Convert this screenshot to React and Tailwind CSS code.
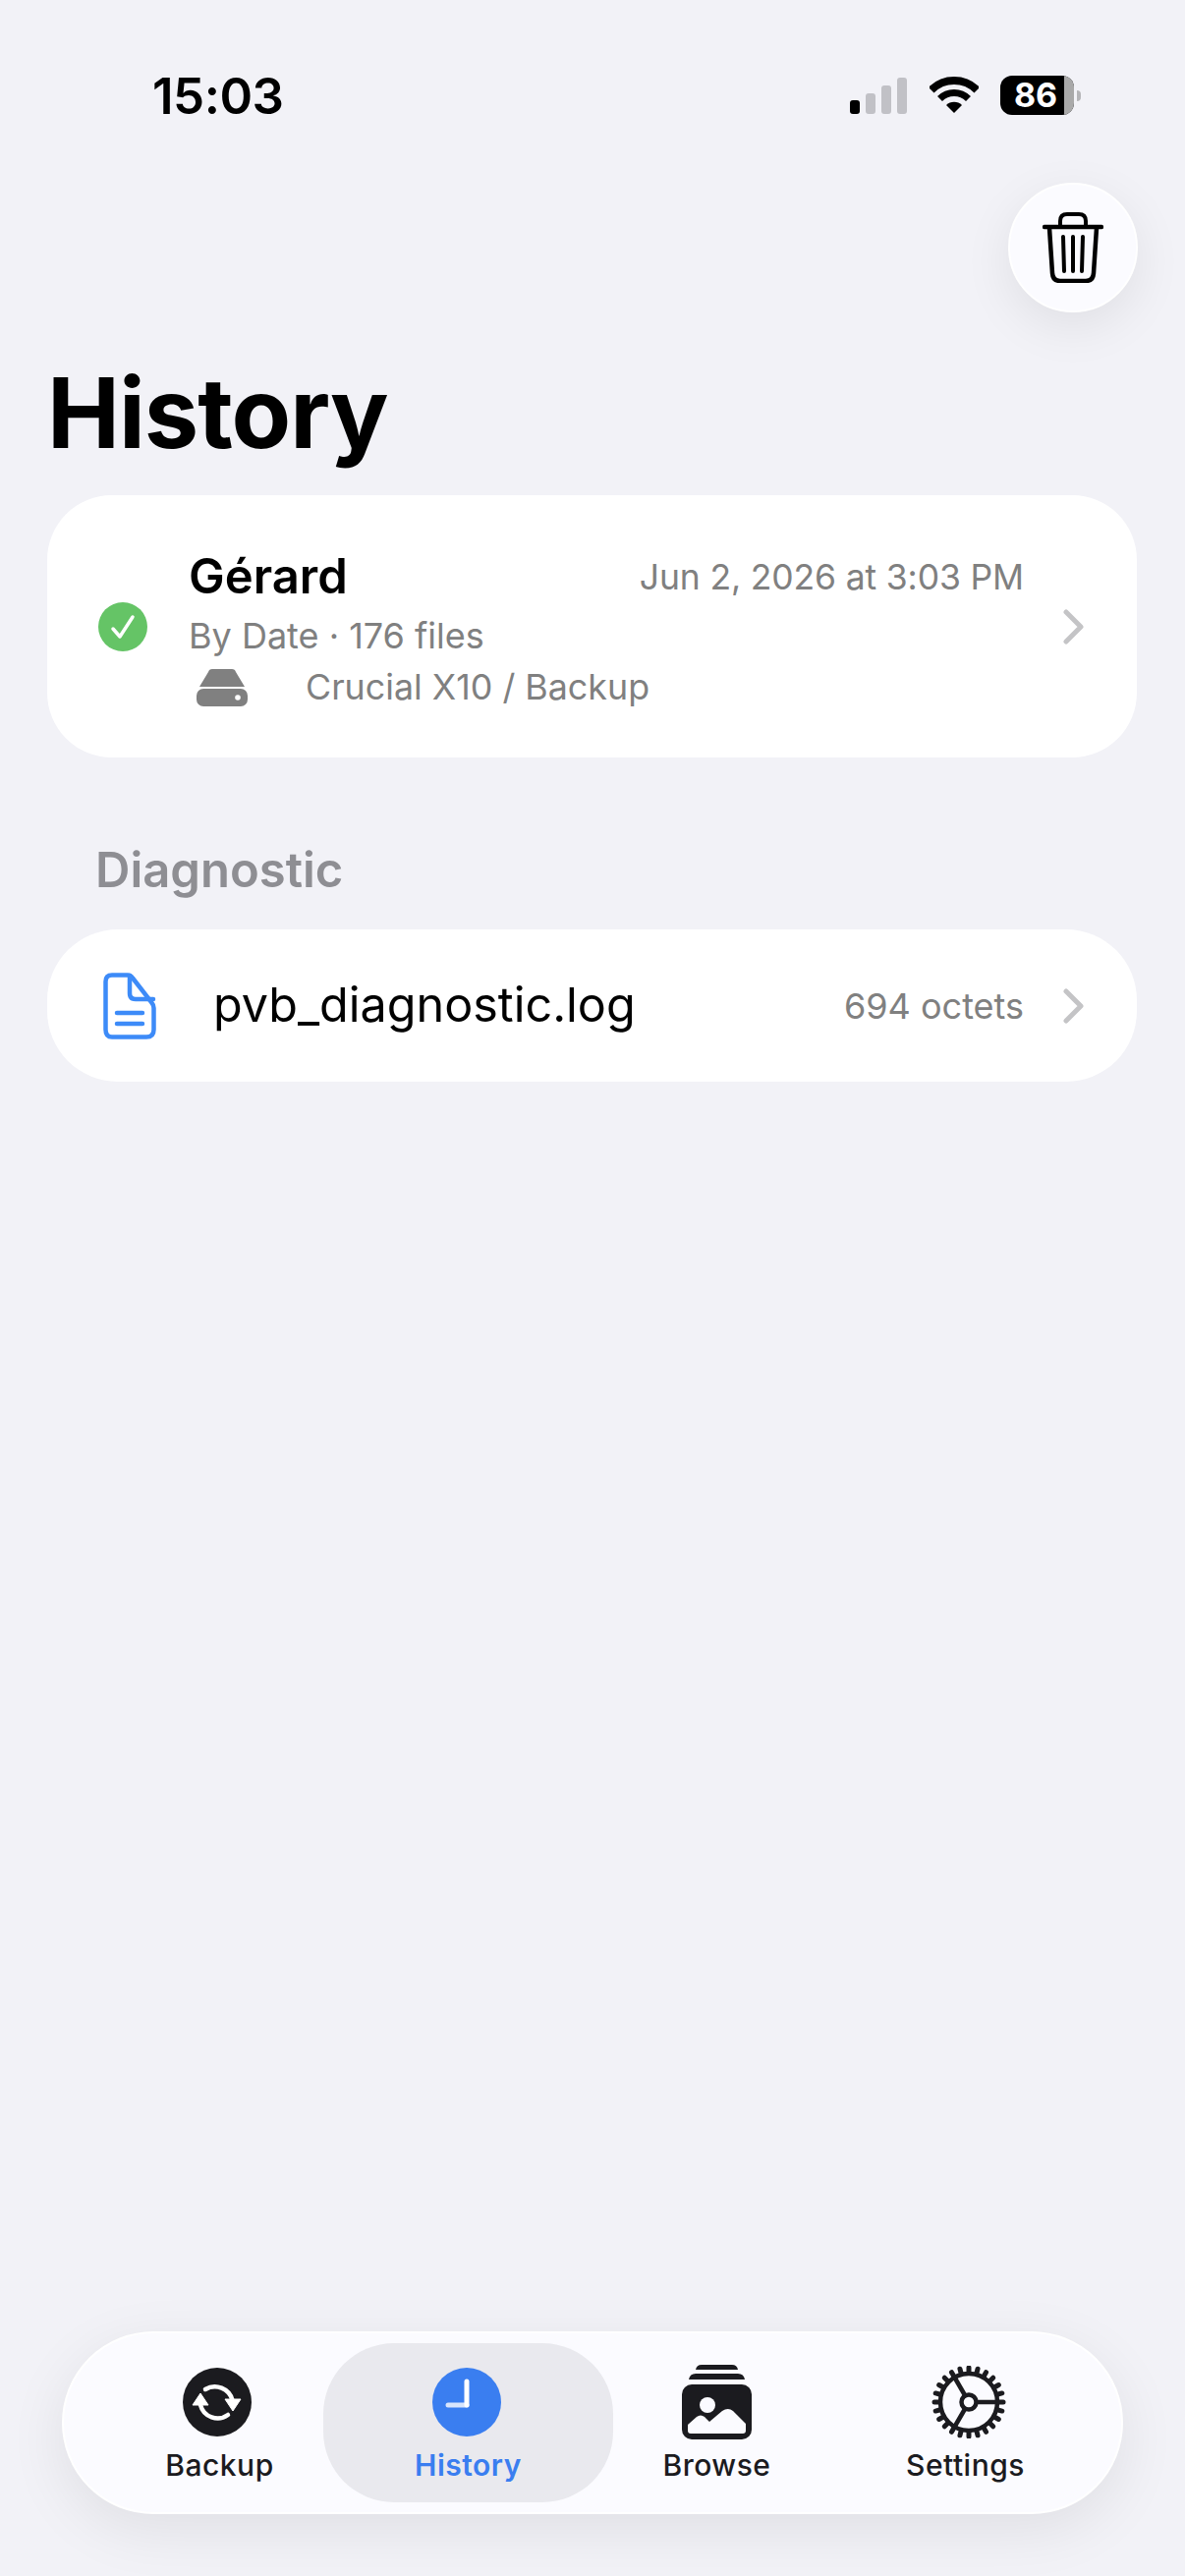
const BatteryStatus = () => (
  <div className="flex items-center">
    <div className="relative flex h-[40px] w-[75px] overflow-hidden rounded-[12px] bg-black">
      <div className="flex w-[65px] items-center justify-center pl-[7px] text-[34px] font-bold leading-none text-white">86</div>
      <div className="w-[10px] bg-[#a9a9a9]" />
    </div>
    <div className="ml-[3px] h-[11px] w-[4px] rounded-r-full bg-[#b5b5b8]" />
  </div>
);

const StatusBar = () => (
  <div className="flex h-[40px] items-center justify-between pl-[155px] pr-[106px]">
    <span className="text-[51px] font-semibold leading-none tracking-[-0.5px] text-black">15:03</span>
    <div className="flex items-center">
      <div className="flex h-[37px] items-end gap-[6px]">
        <div className="h-[14px] w-[10px] rounded-[3px] bg-black" />
        <div className="h-[21px] w-[10px] rounded-[3px] bg-[#c1c1c6]" />
        <div className="h-[29px] w-[10px] rounded-[3px] bg-[#c1c1c6]" />
        <div className="h-[37px] w-[10px] rounded-[3px] bg-[#c1c1c6]" />
      </div>
      <svg className="ml-[23px] mr-[22px]" width="50" height="38" viewBox="0 0 50 38">
        <path d="M1.7 13.7A33 33 0 0 1 48.3 13.7" fill="none" stroke="#000" strokeWidth="8" />
        <path d="M10.5 22.5A20.5 20.5 0 0 1 39.5 22.5" fill="none" stroke="#000" strokeWidth="7" />
        <path d="M25 37L17 29A11.3 11.3 0 0 1 33 29Z" fill="#000" />
      </svg>
      <BatteryStatus />
    </div>
  </div>
);

const TrashIcon = () => (
  <svg width="62" height="72" viewBox="0 0 62 72" fill="none" stroke="#000" strokeLinecap="round" strokeLinejoin="round">
    <path d="M2 15H60" strokeWidth="4.5" />
    <path d="M18 15V9Q18 2 25 2H37Q44 2 44 9V15" strokeWidth="4" />
    <path d="M7 16L10 62Q10.500 70 18 70H44Q51.500 70 52 62L55 16" strokeWidth="4.5" />
    <path d="M21 25L22 60M31 25V60M41 25L40 60" strokeWidth="4" />
  </svg>
);

const CheckBadge = () => (
  <svg width="50" height="50" viewBox="0 0 50 50">
    <circle cx="25" cy="25" r="25" fill="#65c466" />
    <path d="M15 27L22 35L35 15" fill="none" stroke="#fff" strokeWidth="3.500" strokeLinecap="round" strokeLinejoin="round" />
  </svg>
);

const DriveIcon = () => (
  <svg width="52" height="38" viewBox="0 0 52 38" fill="#808080">
    <path d="M12 3Q12.800 0 16 0H36Q39.200 0 40 3L49 18H3Z" />
    <rect x="0" y="20" width="52" height="18" rx="7" />
    <circle cx="42" cy="29" r="2.800" fill="#fff" />
  </svg>
);

const DocIcon = () => (
  <svg width="54" height="68" viewBox="0 0 54 68" fill="none" stroke="#3d8bf8" strokeWidth="4.500" strokeLinecap="round" strokeLinejoin="round">
    <path d="M9 2.500H25Q28 2.500 30 5.500L49 30Q51.500 33 51.500 36V58Q51.500 65.500 44 65.500H9Q2.500 65.500 2.500 58V9Q2.500 2.500 9 2.500Z" />
    <path d="M27 3V21Q27 27 33 27H51" />
    <path d="M14 41H40M14 52H40" />
  </svg>
);

const Chevron = () => (
  <svg width="21" height="36" viewBox="0 0 21 36" fill="none" stroke="#c4c4c6" strokeWidth="5" strokeLinecap="round" strokeLinejoin="round">
    <path d="M3 3L18 18L3 33" />
  </svg>
);

const SyncIcon = () => (
  <svg className="mr-[5px]" width="70" height="70" viewBox="0 0 70 70">
    <circle cx="35" cy="35" r="35" fill="#1b1b1f" />
    <path d="M23 22A18.500 18.500 0 0 1 50.500 33" fill="none" stroke="#fff" strokeWidth="4.500" strokeLinecap="round" />
    <path d="M18 38A18 18 0 0 0 46 48" fill="none" stroke="#fff" strokeWidth="4.500" strokeLinecap="round" />
    <path d="M18 26L26 38H10Z" fill="#fff" stroke="#fff" strokeWidth="1" strokeLinejoin="round" />
    <path d="M51 44L43 32H59Z" fill="#fff" stroke="#fff" strokeWidth="1" strokeLinejoin="round" />
  </svg>
);

const ClockIcon = () => (
  <svg className="mr-[3px]" width="70" height="70" viewBox="0 0 70 70" fill="none" strokeLinecap="round" strokeLinejoin="round">
    <circle cx="35" cy="35" r="35" fill="#3a7ef0" />
    <path d="M35 14V38" stroke="#fff" strokeWidth="5" />
    <path d="M35 38H16" stroke="#fff" strokeOpacity="0.8" strokeWidth="5" />
  </svg>
);

const BrowseIcon = () => (
  <svg width="71" height="76" viewBox="0 0 71 76">
    <path d="M14 5Q15 0 20 0H51Q56 0 57 5Z" fill="#1b1b1f" />
    <path d="M7 15Q8 9 14 9H57Q63 9 64 15Z" fill="#1b1b1f" />
    <rect x="0" y="20" width="71" height="56" rx="10" fill="#1b1b1f" />
    <circle cx="26" cy="41" r="8" fill="#fbfbff" />
    <path d="M6 61L15 53Q19 50 23 53L28 58L41 47Q47 43 52 47L65 60V67Q65 70 62 70H9Q6 70 6 67Z" fill="#fbfbff" />
  </svg>
);

const GearIcon = () => {
  const teeth = Array.from({ length: 24 }, (_, i) => i * 15);
  return (
    <svg className="ml-[6px]" width="76" height="74" viewBox="0 0 76 74" fill="none" stroke="#1b1b1f">
      <circle cx="38" cy="37" r="29" strokeWidth="4.500" />
      {teeth.map((deg) => (
        <path key={deg} d="M38 7V2" strokeWidth="5" strokeLinecap="round" transform={`rotate(${deg} 38 37)`} />
      ))}
      <circle cx="38" cy="37" r="7.500" strokeWidth="4.500" />
      <path d="M45 37H66M34 30L23 11M34 44L23 63" strokeWidth="4.500" />
    </svg>
  );
};

const Tab = ({ icon, label, active }) => (
  <div className={active
    ? 'flex h-[162px] w-[295px] -mx-[21px] flex-col items-center rounded-[72px] bg-[#e9e9ee] pt-[20px]'
    : 'flex h-[162px] w-[253px] flex-col items-center pt-[20px]'}>
    <div className="flex h-[80px] items-center justify-center">{icon}</div>
    <span className={active
      ? 'mt-[4px] text-[30px] font-semibold leading-[40px] tracking-[0.5px] text-[#3a7ef0]'
      : 'mt-[4px] text-[30px] font-medium leading-[40px] tracking-[0.5px] text-[#1b1b1f]'}>{label}</span>
  </div>
);

const App = () => {
  return (
    <div className="flex h-[2622px] w-[1206px] flex-col overflow-hidden bg-[#f2f2f7] pt-[77px] font-['Inter',sans-serif]">
      <StatusBar />

      <div className="flex justify-end pr-[48px] pt-[69px]">
        <button className="flex h-[132px] w-[132px] items-center justify-center rounded-full border-2 border-white bg-[#fbfbff] shadow-[0_14px_50px_rgba(0,0,0,0.08)]">
          <TrashIcon />
        </button>
      </div>

      <h1 className="ml-[48px] mt-[44px] text-[99px] font-bold leading-[116px] tracking-[-1px] text-black">History</h1>

      {/* Last run */}
      <div className="mx-[48px] mt-[26px] flex h-[267px] w-[1109px] items-center rounded-[66px] bg-white pl-[52px] pr-[54px]">
        <CheckBadge />
        <div className="ml-[42px] flex-1 pt-[6px]">
          <div className="flex items-center justify-between pr-[40px]">
            <span className="text-[49px] font-semibold leading-[58px] text-black">Gérard</span>
            <span className="pt-[3px] text-[35.5px] leading-[58px] tracking-[-0.15px] text-[#808080]">Jun 2, 2026 at 3:03 PM</span>
          </div>
          <div className="mt-[7px] text-[36px] leading-[46px] text-[#808080]">By Date · 176 files</div>
          <div className="mt-[5px] flex h-[50px] items-center pl-[8px]">
            <DriveIcon />
            <span className="ml-[59px] text-[35.8px] leading-none text-[#808080]">Crucial X10 / Backup</span>
          </div>
        </div>
        <Chevron />
      </div>

      <h2 className="ml-[97px] mt-[86px] text-[49px] font-semibold leading-[58px] text-[#8e8e93]">Diagnostic</h2>

      {/* Log file */}
      <div className="mx-[48px] mt-[31px] flex h-[155px] w-[1109px] items-center rounded-[72px] bg-white pl-[57px] pr-[54px]">
        <DocIcon />
        <span className="ml-[58px] flex-1 text-[48.5px] leading-none text-black">pvb_diagnostic.log</span>
        <span className="mr-[40px] text-[36px] leading-none text-[#808080]">694 octets</span>
        <Chevron />
      </div>

      <nav className="mx-[63px] mb-[63px] mt-auto flex h-[186px] w-[1080px] items-center rounded-[93px] border-2 border-white bg-[#fbfbff] pl-[32px] shadow-[0_16px_60px_rgba(0,0,0,0.08)]">
        <Tab icon={<SyncIcon />} label="Backup" />
        <Tab icon={<ClockIcon />} label="History" active />
        <Tab icon={<BrowseIcon />} label="Browse" />
        <Tab icon={<GearIcon />} label="Settings" />
      </nav>
    </div>
  );
};

export default App;
